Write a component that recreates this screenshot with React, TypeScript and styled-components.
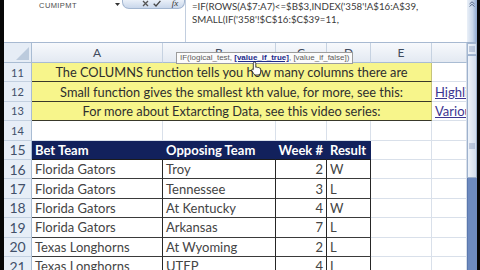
import { Fragment } from "react";
import styled, { createGlobalStyle } from "styled-components";

const GlobalStyle = createGlobalStyle`
  html, body {
    margin: 0;
    padding: 0;
    background: #000;
  }
  body {
    width: 480px;
    height: 270px;
    overflow: hidden;
  }
`;

type Kind = "plain" | "note" | "head" | "data";
type Align = "left" | "right" | "center";

const Screen = styled.div`
  position: relative;
  width: 480px;
  height: 270px;
  display: flex;
  background: #000;
  overflow: hidden;
  font-family: Lato, "Open Sans", sans-serif;
`;

const Edge = styled.div<{ $w: number }>`
  width: ${p => p.$w}px;
  flex-shrink: 0;
  background: #070707;
`;

const Workspace = styled.div`
  width: 463px;
  flex-shrink: 0;
  display: flex;
  flex-direction: column;
  background: #fff;
  overflow: hidden;
`;

// formula bar ------------------------------------------------------------
const FormulaBar = styled.div`
  height: 42px;
  flex-shrink: 0;
  display: flex;
  border-bottom: 1px solid #a7b9d1;
  background: #fff;
`;

const NameBox = styled.div`
  width: 108px;
  height: 11px;
  display: flex;
  align-items: center;
  justify-content: center;
  font-family: "Liberation Sans", Arial, sans-serif;
  font-size: 7.5px;
  letter-spacing: 0.4px;
  color: #4d4d4d;
`;

const Drop = styled.div`
  width: 10px;
  height: 9px;
  display: flex;
  align-items: center;
  justify-content: center;
`;

const Pill = styled.div`
  width: 63px;
  height: 10px;
  margin-top: -1px;
  box-sizing: border-box;
  display: flex;
  align-items: center;
  padding-left: 17px;
  border: 1px solid #a3b6d0;
  border-top: none;
  border-radius: 0 0 7px 7px;
  background: linear-gradient(#eef3fa, #c9d7eb);
`;

const Slot = styled.div<{ $w: number; $ml?: number }>`
  width: ${p => p.$w}px;
  margin-left: ${p => p.$ml ?? 0}px;
  display: flex;
  align-items: center;
  justify-content: center;
`;

const Fx = styled.span`
  font-family: "Liberation Serif", serif;
  font-style: italic;
  font-size: 9px;
  line-height: 9px;
  color: #333;
`;

const FormulaText = styled.div`
  flex: 1;
  border-left: 1px solid #c2cedf;
  padding-left: 6px;
  font-size: 9.7px;
  line-height: 13px;
  color: #3a3a3a;
  white-space: nowrap;
  overflow: hidden;
`;

// sheet grid -------------------------------------------------------------
const Sheet = styled.div`
  display: grid;
  grid-template-columns: 28px 131px 113px 51px 44px 61px 35px;
  grid-template-rows: 20px;
  grid-auto-rows: 19.4px;
`;

const Corner = styled.div`
  position: relative;
  box-sizing: border-box;
  background: #e6edf6;
  border-right: 1px solid #a9bcd3;
  border-bottom: 1px solid #a9bcd3;
  &::after {
    content: "";
    position: absolute;
    right: 2px;
    bottom: 2px;
    border-left: 13px solid transparent;
    border-bottom: 13px solid #bccbdd;
  }
`;

const ColHead = styled.div`
  box-sizing: border-box;
  display: flex;
  align-items: center;
  justify-content: center;
  background: linear-gradient(#f7f9fc, #e3e9f2);
  border-right: 1px solid #c6d2e1;
  border-bottom: 1px solid #a9bcd3;
  font-size: 12px;
  color: #3f4b5e;
`;

const RowHead = styled.div<{ $big?: boolean }>`
  box-sizing: border-box;
  display: flex;
  align-items: center;
  justify-content: center;
  background: #e7eef7;
  border-right: 1px solid #a9bcd3;
  border-bottom: 1px solid #c3d0e0;
  font-size: ${p => (p.$big ? 14 : 11)}px;
  color: #42506a;
`;

const palette: Record<Kind, { bg: string; right: string; bottom: string; color: string }> = {
  plain: { bg: "#fff", right: "#d9e0ea", bottom: "#d9e0ea", color: "#333" },
  note: { bg: "#f7f58b", right: "#c6c47a", bottom: "#39392a", color: "#2e2e2e" },
  head: { bg: "#12215c", right: "#12215c", bottom: "#1b1b1b", color: "#fff" },
  data: { bg: "#fff", right: "#262626", bottom: "#3a3a3a", color: "#444" },
};

const Cell = styled.div<{ $kind: Kind; $align?: Align; $span?: number }>`
  box-sizing: border-box;
  grid-column: span ${p => p.$span ?? 1};
  display: flex;
  align-items: center;
  justify-content: ${p =>
    p.$align === "right" ? "flex-end" : p.$align === "center" ? "center" : "flex-start"};
  padding: 0 3px;
  white-space: nowrap;
  overflow: hidden;
  background: ${p => palette[p.$kind].bg};
  color: ${p => palette[p.$kind].color};
  border-right: 1px solid ${p => palette[p.$kind].right};
  border-bottom: 1px solid ${p => palette[p.$kind].bottom};
  font-size: ${p => (p.$kind === "note" ? 12.8 : 13)}px;
  font-weight: ${p => (p.$kind === "head" ? 700 : 400)};
`;

const Link = styled.span`
  color: #3d3591;
  text-decoration: underline;
`;

// scroll bar -------------------------------------------------------------
const ScrollCol = styled.div`
  width: 10px;
  flex-shrink: 0;
  display: flex;
  flex-direction: column;
`;

const Expand = styled.div`
  height: 43px;
  flex-shrink: 0;
  display: flex;
  justify-content: center;
  padding-top: 1px;
  box-sizing: border-box;
  background: linear-gradient(90deg, #eaf0f8 0%, #c9d7ea 55%, #8ea8d0 100%);
  border-bottom: 1px solid #9fb2cc;
`;

const UpButton = styled.div`
  height: 12px;
  flex-shrink: 0;
  box-sizing: border-box;
  border: 1px solid #a4b7d1;
  background: linear-gradient(90deg, #f2f6fb, #d6e1ef);
  display: flex;
  align-items: center;
  justify-content: center;
`;

const Thumb = styled.div`
  height: 123px;
  flex-shrink: 0;
  box-sizing: border-box;
  border: 1px solid #9db1cd;
  background: linear-gradient(90deg, #eef3fa, #d2ddee);
  display: flex;
  justify-content: center;
  padding-top: 87px;
`;

const Track = styled.div`
  flex: 1;
  background: #6d8abf;
  border-left: 1px solid #5b78ae;
`;

// overlays ---------------------------------------------------------------
const Tip = styled.div`
  position: absolute;
  left: 176px;
  top: 52px;
  height: 12px;
  box-sizing: border-box;
  padding: 0 3px;
  background: #fbfbfb;
  border: 1px solid #9c9c9c;
  font-family: "Liberation Sans", Arial, sans-serif;
  font-size: 8px;
  line-height: 10px;
  color: #5c5c5c;
  white-space: nowrap;
`;

const TipArg = styled.span`
  font-weight: 700;
  color: #1d2b8c;
  text-decoration: underline;
`;

const Cursor = styled.svg`
  position: absolute;
  left: 251px;
  top: 61px;
`;

const notes = [
  { n: 11, text: "The COLUMNS function tells you how many columns there are", link: "" },
  { n: 12, text: "Small function gives the smallest kth value, for more, see this:", link: "Highlighting" },
  { n: 13, text: "For more about Extarcting Data, see this video series:", link: "Various" },
];

const games = [
  ["Florida Gators", "Troy", "2", "W"],
  ["Florida Gators", "Tennessee", "3", "L"],
  ["Florida Gators", "At Kentucky", "4", "W"],
  ["Florida Gators", "Arkansas", "7", "L"],
  ["Texas Longhorns", "At Wyoming", "2", "L"],
  ["Texas Longhorns", "UTEP", "4", "L"],
];

const Grip = () => (
  <svg width="6" height="6" viewBox="0 0 6 6">
    <path d="M0 1h6M0 3h6M0 5h6" stroke="#7d93b6" strokeWidth="0.8" />
  </svg>
);

const App = () => {
  return (
    <>
      <GlobalStyle />
      <Screen>
        <Edge $w={4} />
        <Workspace>
          <FormulaBar>
            <NameBox>CUMIPMT</NameBox>
            <Drop>
              <svg width="5" height="3" viewBox="0 0 5 3">
                <path d="M0 0h5L2.5 3z" fill="#333" />
              </svg>
            </Drop>
            <Pill>
              <Slot $w={10}>
                <svg width="7" height="7" viewBox="0 0 7 7">
                  <path d="M1 1l5 5M6 1L1 6" stroke="#555" strokeWidth="1.3" />
                </svg>
              </Slot>
              <Slot $w={13}>
                <svg width="8" height="7" viewBox="0 0 8 7">
                  <path d="M0.7 3.8L3 6L7.4 0.8" stroke="#444" strokeWidth="1.3" fill="none" />
                </svg>
              </Slot>
              <Slot $w={14} $ml={5}>
                <Fx>fx</Fx>
              </Slot>
            </Pill>
            <FormulaText>
              <div>=IF(ROWS(A$7:A7)&lt;=$B$3,INDEX('358'!A$16:A$39,</div>
              <div>SMALL(IF('358'!$C$16:$C$39=11,</div>
            </FormulaText>
          </FormulaBar>

          <Sheet>
            <Corner />
            {["A", "B", "C", "D", "E", ""].map((c, i) => (
              <ColHead key={i}>{c}</ColHead>
            ))}

            {notes.map(r => (
              <Fragment key={r.n}>
                <RowHead>{r.n}</RowHead>
                <Cell $kind="note" $span={5} $align="center">
                  {r.text}
                </Cell>
                <Cell $kind="plain">{r.link && <Link>{r.link}</Link>}</Cell>
              </Fragment>
            ))}

            <RowHead>14</RowHead>
            {[0, 1, 2, 3, 4, 5].map(i => (
              <Cell key={`e${i}`} $kind="plain" />
            ))}

            <RowHead $big>15</RowHead>
            <Cell $kind="head">Bet Team</Cell>
            <Cell $kind="head">Opposing Team</Cell>
            <Cell $kind="head" $align="right">Week #</Cell>
            <Cell $kind="head">Result</Cell>
            <Cell $kind="plain" />
            <Cell $kind="plain" />

            {games.map((g, i) => (
              <Fragment key={i}>
                <RowHead $big>{16 + i}</RowHead>
                <Cell $kind="data">{g[0]}</Cell>
                <Cell $kind="data">{g[1]}</Cell>
                <Cell $kind="data" $align="right">{g[2]}</Cell>
                <Cell $kind="data">{g[3]}</Cell>
                <Cell $kind="plain" />
                <Cell $kind="plain" />
              </Fragment>
            ))}
          </Sheet>
        </Workspace>

        <ScrollCol>
          <Expand>
            <svg width="6" height="6" viewBox="0 0 6 6">
              <path d="M0.5 3L3 0.8L5.5 3M0.5 5.5L3 3.3L5.5 5.5" stroke="#4c5f80" strokeWidth="0.9" fill="none" />
            </svg>
          </Expand>
          <UpButton>
            <Grip />
          </UpButton>
          <Thumb>
            <Grip />
          </Thumb>
          <Track />
        </ScrollCol>
        <Edge $w={3} />

        <Tip>
          IF(logical_test, <TipArg>[value_if_true]</TipArg>, [value_if_false])
        </Tip>
        <Cursor width="11" height="15" viewBox="0 0 11 15">
          <path
            d="M3.5 1C4.3 1 4.8 1.5 4.8 2.3V6.3C5.2 6 6.2 6 6.5 6.6C7 6.3 8 6.4 8.2 7.1C8.7 6.9 9.6 7.1 9.7 7.9V11C9.7 12.6 8.6 14 7 14H5C3.8 14 3.2 13.4 2.6 12.5L0.8 9.6C0.4 9 0.7 8.3 1.3 8.2C1.7 8.1 2.1 8.3 2.3 8.6V2.3C2.3 1.5 2.8 1 3.5 1Z"
            fill="#fff"
            stroke="#111"
            strokeWidth="0.8"
          />
        </Cursor>
      </Screen>
    </>
  );
};

export default App;
